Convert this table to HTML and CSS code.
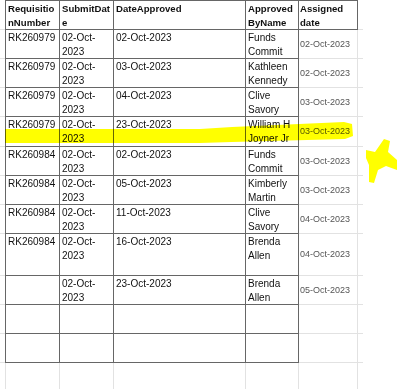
FILE: index.html
```html
<!DOCTYPE html>
<html lang="en">
<head>
  <meta charset="UTF-8">
  <title>Approvals</title>
  <link rel="stylesheet" href="styles.css">
</head>
<body>
  <div class="sheet">
    <table class="grid">
      <tr class="head">
        <td class="gut"></td>
        <td class="c1">Requisitio<wbr>nNumber</td>
        <td class="c2">SubmitDat<wbr>e</td>
        <td class="c3">DateApproved</td>
        <td class="c4">Approved ByName</td>
        <td class="c5">Assigned date</td>
        <td class="tail"></td>
      </tr>
      <tr>
        <td class="gut"></td><td class="c1">RK260979</td><td class="c2">02-Oct-2023</td><td class="c3">02-Oct-2023</td><td class="c4">Funds Commit</td><td class="c5">02-Oct-2023</td><td class="tail"></td>
      </tr>
      <tr>
        <td class="gut"></td><td class="c1">RK260979</td><td class="c2">02-Oct-2023</td><td class="c3">03-Oct-2023</td><td class="c4">Kathleen Kennedy</td><td class="c5">02-Oct-2023</td><td class="tail"></td>
      </tr>
      <tr>
        <td class="gut"></td><td class="c1">RK260979</td><td class="c2">02-Oct-2023</td><td class="c3">04-Oct-2023</td><td class="c4">Clive Savory</td><td class="c5">03-Oct-2023</td><td class="tail"></td>
      </tr>
      <tr class="r30">
        <td class="gut"></td><td class="c1">RK260979</td><td class="c2">02-Oct-2023</td><td class="c3">23-Oct-2023</td><td class="c4">William H Joyner Jr</td><td class="c5">03-Oct-2023</td><td class="tail"></td>
      </tr>
      <tr>
        <td class="gut"></td><td class="c1">RK260984</td><td class="c2">02-Oct-2023</td><td class="c3">02-Oct-2023</td><td class="c4">Funds Commit</td><td class="c5">03-Oct-2023</td><td class="tail"></td>
      </tr>
      <tr>
        <td class="gut"></td><td class="c1">RK260984</td><td class="c2">02-Oct-2023</td><td class="c3">05-Oct-2023</td><td class="c4">Kimberly Martin</td><td class="c5">03-Oct-2023</td><td class="tail"></td>
      </tr>
      <tr>
        <td class="gut"></td><td class="c1">RK260984</td><td class="c2">02-Oct-2023</td><td class="c3">11-Oct-2023</td><td class="c4">Clive Savory</td><td class="c5">04-Oct-2023</td><td class="tail"></td>
      </tr>
      <tr class="tall">
        <td class="gut"></td><td class="c1">RK260984</td><td class="c2">02-Oct-2023</td><td class="c3">16-Oct-2023</td><td class="c4">Brenda Allen</td><td class="c5">04-Oct-2023</td><td class="tail"></td>
      </tr>
      <tr>
        <td class="gut"></td><td class="c1"></td><td class="c2">02-Oct-2023</td><td class="c3">23-Oct-2023</td><td class="c4">Brenda Allen</td><td class="c5">05-Oct-2023</td><td class="tail"></td>
      </tr>
      <tr>
        <td class="gut"></td><td class="c1"></td><td class="c2"></td><td class="c3"></td><td class="c4"></td><td class="c5"></td><td class="tail"></td>
      </tr>
      <tr class="last">
        <td class="gut"></td><td class="c1"></td><td class="c2"></td><td class="c3"></td><td class="c4"></td><td class="c5"></td><td class="tail"></td>
      </tr>
      <tr class="blank">
        <td class="gut"></td><td class="c1"></td><td class="c2"></td><td class="c3"></td><td class="c4"></td><td class="c5"></td><td class="tail"></td>
      </tr>
    </table>

    <!-- highlighter marks drawn over the sheet -->
    <svg class="marker" width="400" height="389" viewBox="0 0 400 389">
      <path d="M5 129 L200 129 L232 127 L344 122 L352 124 L353 136 L345 139 L232 142 L200 143 L5 143 Z"/>
      <path d="M384 139 L390 141 L388 152 L397 160 L397 170 L386 166 L378 170 L374 183 L369 182 L369 165 L366 158 L366 150 L375 152 Z"/>
    </svg>
  </div>
</body>
</html>
```

FILE: styles.css
```css
body {
  margin: 0;
  background: #fff;
  font-family: "Liberation Sans", Arial, sans-serif;
  font-size: 10px;
  color: #111;
}
.sheet {
  position: relative;
  width: 400px;
  height: 389px;
  overflow: hidden;
}
.grid {
  border-collapse: separate;
  border-spacing: 0;
  table-layout: fixed;
}
.grid td {
  box-sizing: content-box;
  height: 27px;
  padding: 1px 0 0 2px;
  line-height: 13.5px;
  vertical-align: top;
  border-right: 1px solid #666;
  border-bottom: 1px solid #666;
  overflow: hidden;
}
.grid .gut {
  width: 5px;
  padding: 0;
  border-right: none;
  border-bottom-color: #e2e2e2;
}
.grid .c1 { width: 51px; border-left: 1px solid #666; }
.grid .c2 { width: 51px; }
.grid .c3 { width: 129px; }
.grid .c4 { width: 50px; }
.grid .c5 {
  width: 57px;
  padding-left: 1px;
  vertical-align: middle;
  font-size: 9px;
  color: #555;
  border-right-color: #e2e2e2;
  border-bottom-color: #e2e2e2;
}
.grid .tail {
  width: 5px;
  padding: 0;
  border-right: none;
  border-bottom-color: #e2e2e2;
}
.head td {
  font-weight: bold;
  font-size: 9.6px;
  border-top: 1px solid #666;
}
.head .gut,
.head .tail {
  border-top: none;
}
.grid .head .c5 {
  vertical-align: top;
  color: #111;
  font-size: 9.6px;
  border-right-color: #666;
  border-bottom-color: #666;
}
.r30 td {
  height: 28px;
}
.tall td {
  height: 40px;
}
.blank td {
  border-bottom: none;
  border-right-color: #e2e2e2;
}
.grid .blank .c1 {
  border-left-color: #e2e2e2;
}
.grid .blank .gut,
.grid .blank .tail {
  border-right: none;
}
.marker {
  position: absolute;
  left: 0;
  top: 0;
  mix-blend-mode: multiply;
  pointer-events: none;
}
.marker path {
  fill: #ffff00;
}
```
